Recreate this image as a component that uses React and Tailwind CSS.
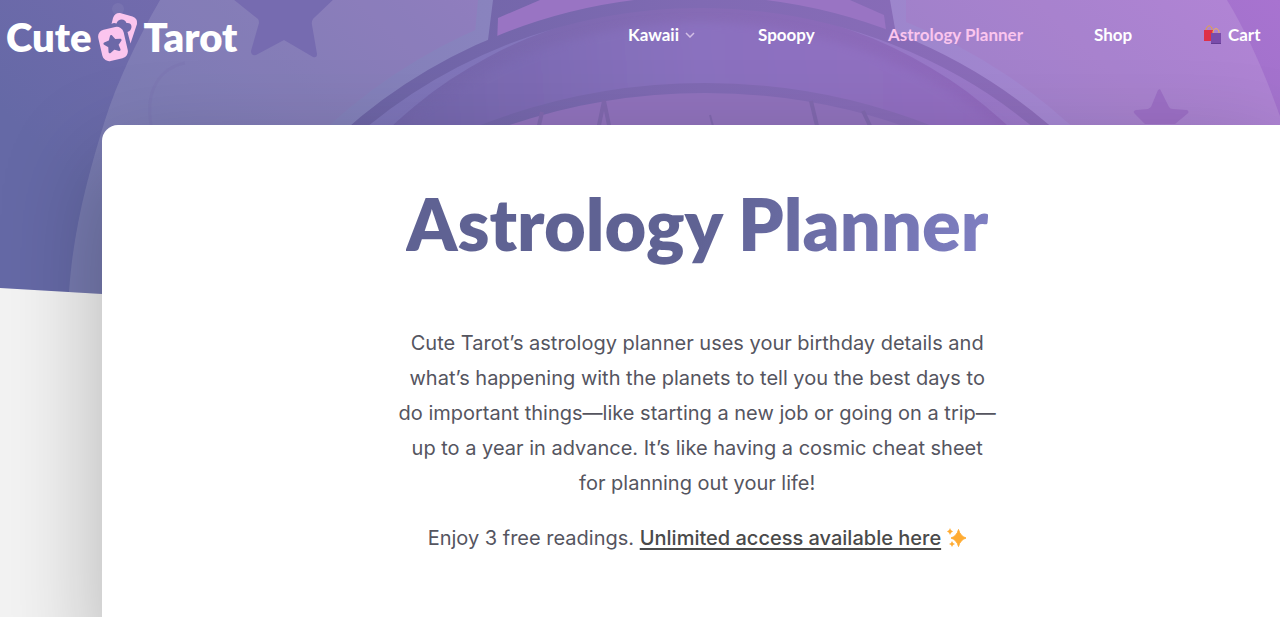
import React from 'react';

const navItems = [
  { label: 'Kawaii', hasMenu: true, width: 'w-[66px]' },
  { label: 'Spoopy', width: 'w-[60px]' },
  { label: 'Astrology Planner', active: true, width: 'w-[136px]' },
  { label: 'Shop', width: 'w-10' },
  { label: 'Cart', icon: true, width: 'w-[58px]' },
];

const HeroArtwork = () => (
  <svg
    className="absolute top-0 left-0 w-full h-auto"
    viewBox="0 0 1280 363"
    aria-hidden="true"
  >
    <defs>
      <linearGradient id="sky" x1="0" y1="0.3" x2="1" y2="0">
        <stop offset="0" stopColor="#6569a6" />
        <stop offset="0.4" stopColor="#7f6cb4" />
        <stop offset="1" stopColor="#a873d0" />
      </linearGradient>
      <linearGradient id="rim" gradientUnits="userSpaceOnUse" x1="340" y1="0" x2="1060" y2="0">
        <stop offset="0" stopColor="#8280b9" />
        <stop offset="0.2" stopColor="#8983be" />
        <stop offset="1" stopColor="#a587d2" />
      </linearGradient>
      <linearGradient id="sliver" gradientUnits="userSpaceOnUse" x1="360" y1="0" x2="1040" y2="0">
        <stop offset="0" stopColor="#7b74b7" />
        <stop offset="1" stopColor="#9d79ca" />
      </linearGradient>
      <linearGradient id="crescent" gradientUnits="userSpaceOnUse" x1="390" y1="0" x2="1010" y2="0">
        <stop offset="0" stopColor="#7266ab" />
        <stop offset="0.5" stopColor="#866bb5" />
        <stop offset="1" stopColor="#9169be" />
      </linearGradient>
      <linearGradient id="band" gradientUnits="userSpaceOnUse" x1="390" y1="125" x2="1010" y2="80">
        <stop offset="0" stopColor="#7266ab" />
        <stop offset="0.5" stopColor="#8a71bf" />
        <stop offset="1" stopColor="#946dc2" />
      </linearGradient>
      <linearGradient id="line" gradientUnits="userSpaceOnUse" x1="350" y1="0" x2="1050" y2="0">
        <stop offset="0" stopColor="#6c64a5" />
        <stop offset="0.5" stopColor="#806ab3" />
        <stop offset="1" stopColor="#8d6cba" />
      </linearGradient>
      <filter id="soft" x="-10%" y="-10%" width="120%" height="120%">
        <feGaussianBlur stdDeviation="4" />
      </filter>
      <clipPath id="slant">
        <path d="M0 0H1280V363L0 288Z" />
      </clipPath>
    </defs>
    <g clipPath="url(#slant)">
      <rect width="1280" height="363" fill="url(#sky)" />

      {/* Halo */}
      <path
        d="M160 0C137 40 117 82 105 120C87 178 73 232 69 292V363H1330C1328 260 1285 95 1227 0Z"
        fill="#fff"
        fillOpacity="0.12"
      />
      <circle cx="118" cy="9" r="6" fill="#fff" fillOpacity="0.06" />
      <path
        d="M151 125C145 90 160 68 185 63"
        fill="none"
        stroke="#7165a8"
        strokeOpacity="0.15"
        strokeWidth="3"
      />

      {/* Stars */}
      <path
        d="M228 -5L258 19Q259 20 259 23L251 51Q251 56 256 55L284 40L313 57Q317 58 317 54L312 25Q311 20 315 17L337 -4Z"
        fill="#766bb0"
      />
      <path
        d="M1160 89L1169 107Q1170 109 1173 109L1187 110Q1190 112 1187 114L1175 124H1145L1135 114Q1132 111 1136 110L1148 109L1151 107L1158 90Z"
        fill="#9c6fc5"
      />

      {/* Wheel frame */}
      <circle cx="700" cy="533" r="551" fill="url(#rim)" />
      <path d="M478 0H906V44H474Z" fill="url(#rim)" />
      <path d="M487 48L493 0H890L897 40L700 60Z" fill="url(#line)" />
      <path d="M497 44L498 18L540 0H850L884 15L888 44L700 60Z" fill="#9974c3" />
      <circle cx="700" cy="533" r="531" fill="url(#sliver)" />
      <circle cx="700" cy="454" r="450" fill="url(#crescent)" />
      <circle cx="700" cy="502" r="480" fill="url(#band)" filter="url(#soft)" />
      <circle cx="700" cy="533" r="531" fill="none" stroke="url(#line)" strokeWidth="12" />

      {/* Inner window */}
      <circle cx="705" cy="704" r="616" fill="#9072bc" stroke="url(#line)" strokeWidth="10" />
      <g fill="none" stroke="#8068ae" strokeWidth="4">
        <path d="M542 112L538 130" />
        <path d="M598 130L604 101L610 130" />
        <path d="M811 101L818 130" />
        <path d="M863 111L872 130" />
        <path d="M710 115L714 130" strokeWidth="2" />
      </g>
    </g>
  </svg>
);

const LogoCards = () => (
  <svg className="w-10 h-[50px] shrink-0" viewBox="0 0 40 50" aria-hidden="true">
    <path
      d="M13.500 12L15 6Q17 .5 22 1L34.500 4.500Q40 6.500 39 12L32.500 31.500L29.500 20Q33 19 33.500 15Q33.500 10.500 28.500 11Q27 7 23 7.500Q19.500 8 18.500 11.500Q15.500 10.500 13.500 12Z"
      fill="#fbc5ee"
    />
    <g transform="rotate(-13 15 32)">
      <rect x="2" y="16" width="26" height="32" rx="7" fill="#fbc5ee" />
      <path
        d="M15 24L17.500 28.800L23 29.700L19 33.600L19.900 39L15 36.500L10.100 39L11 33.600L7 29.700L12.500 28.800Z"
        fill="#6c68a8"
        stroke="#6c68a8"
        strokeWidth="2.500"
        strokeLinejoin="round"
      />
    </g>
  </svg>
);

const ShoppingBags = () => (
  <svg className="w-[18px] h-5 shrink-0" viewBox="0 0 18 20" aria-hidden="true">
    <path d="M2 6V4Q5 -2 8 3V6" fill="none" stroke="#e8a33b" />
    <path d="M0 5H9V16H0Z" fill="#df2f48" />
    <path d="M9 9V6Q12 1 15 6V9" fill="none" stroke="#f0b44c" />
    <path d="M7 8H17V19H7Z" fill="#7a4caa" />
    <path d="M7 18H17V19H7Z" fill="#643d94" />
  </svg>
);

const Sparkles = () => (
  <svg
    className="inline-block w-5 h-5 align-[-3px]"
    viewBox="0 0 20 20"
    fill="#ffac33"
    aria-hidden="true"
  >
    <path
      d="M11.500 1.500Q13 8 19 10Q13 12 11.500 18.500Q10 12 4 10Q10 8 11.500 1.500Z"
      stroke="#ffac33"
      strokeLinejoin="round"
    />
    <path d="M3 0Q3.500 3 6 3.500Q3.500 4 3 7Q2.500 4 0 3.500Q2.500 3 3 0Z" />
    <path d="M5 13Q5.500 15.500 8 16Q5.500 16.500 5 19Q4.500 16.500 2 16Q4.500 15.500 5 13Z" />
  </svg>
);

const Header = () => (
  <header className="flex items-start justify-between pl-[6px] pr-[18px] pt-3 h-[125px]">
    <a
      href="#home"
      className="flex items-center gap-[6px] text-[40px] leading-[50px] font-extrabold text-white"
    >
      <span>Cute</span>
      <LogoCards />
      <span>Tarot</span>
    </a>

    <nav className="flex items-center gap-[70px] pt-2">
      {navItems.map((item) => (
        <a
          key={item.label}
          href="#menu"
          className={`flex items-center gap-[6px] text-[17px] leading-[30px] font-bold whitespace-nowrap ${item.width} ${
            item.active ? 'text-[#fbc5ee]' : 'text-white'
          } ${item.hasMenu ? '-mr-[6px]' : ''}`}
        >
          {item.icon && <ShoppingBags />}
          {item.label}
          {item.hasMenu && (
            <svg className="w-[10px] h-[6px] shrink-0" viewBox="0 0 10 6" aria-hidden="true">
              <path d="M1 1L5 5L9 1" fill="none" stroke="#d3bfe6" strokeWidth="1.500" />
            </svg>
          )}
        </a>
      ))}
    </nav>
  </header>
);

const App = () => {
  return (
    <div className="relative min-h-screen overflow-hidden bg-[#f3f3f3] font-['Lato',sans-serif]">
      <HeroArtwork />
      <div className="relative">
        <Header />

        <main className="ml-[8%] min-h-[520px] rounded-tl-2xl bg-white pl-3 pt-14 text-center shadow-[0_40px_100px_rgba(0,0,0,0.27)]">
          <h1 className="mx-auto w-fit bg-linear-[110deg] from-[#5f6293] from-50% to-[#8080c4] bg-clip-text text-[72px] leading-[84px] font-extrabold text-transparent">
            Astrology Planner
          </h1>

          <div className="mt-[61px] space-y-5 text-[20px] leading-[35px] text-[#55555f] font-['Inter',sans-serif]">
            <p>
              Cute Tarot’s astrology planner uses your birthday details and
              <br />
              what’s happening with the planets to tell you the best days to
              <br />
              do important things—like starting a new job or going on a trip—
              <br />
              up to a year in advance. It’s like having a cosmic cheat sheet
              <br />
              for planning out your life!
            </p>
            <p>
              Enjoy 3 free readings.{' '}
              <a
                href="#unlimited"
                className="font-medium text-[#4a4a4a] underline decoration-2 underline-offset-3"
              >
                Unlimited access available here
              </a>{' '}
              <Sparkles />
            </p>
          </div>
        </main>
      </div>
    </div>
  );
};

export default App;
